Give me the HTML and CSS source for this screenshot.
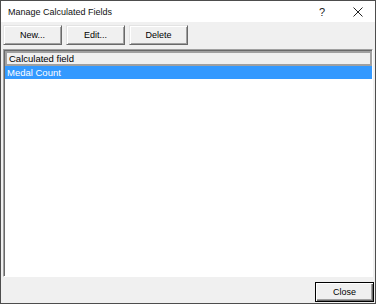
FILE: index.html
```html
<!DOCTYPE html>
<html lang="en">
<head>
  <meta charset="UTF-8" />
  <title>Manage Calculated Fields</title>
  <link rel="stylesheet" href="styles.css">
</head>
<body>

  <div class="dialog">
    <div class="titlebar">
      <span class="title">Manage Calculated Fields</span>
      <span class="help">?</span>
      <svg class="close-x" viewBox="0 0 10 10" width="10" height="10">
        <path d="M0.5 0.5 L9.5 9.5 M9.5 0.5 L0.5 9.5" stroke="#222" stroke-width="1"/>
      </svg>
    </div>

    <div class="toolbar">
      <button class="btn">New...</button>
      <button class="btn">Edit...</button>
      <button class="btn">Delete</button>
    </div>

    <div class="list">
      <div class="list-header">Calculated field</div>
      <div class="list-row selected">Medal Count</div>
    </div>

    <div class="footer">
      <button class="btn default">Close</button>
    </div>
  </div>

</body>
</html>
```

FILE: styles.css
```css
html, body {
  margin: 0;
  padding: 0;
  background: #fff;
  font-family: "Liberation Sans", Arial, sans-serif;
  font-size: 9.5px;
  color: #000;
}

.dialog {
  width: 376px;
  height: 304px;
  box-sizing: border-box;
  border: 1px solid #4d4d4d;
  background: #f0f0f0;
  display: flex;
  flex-direction: column;
}

.titlebar {
  height: 21px;
  background: #fff;
  display: flex;
  align-items: center;
  padding: 0 0 0 7px;
}

.title {
  flex: 1;
  font-size: 9px;
  color: #111;
}

.help {
  font-size: 11px;
  width: 10px;
  margin-right: 24px;
  color: #222;
}

.close-x {
  margin-right: 12px;
}

.toolbar {
  display: flex;
  gap: 4px;
  padding: 3px 2px 0;
}

.btn {
  width: 59px;
  height: 20px;
  box-sizing: border-box;
  margin: 0;
  padding: 0;
  font-family: "Liberation Sans", Arial, sans-serif;
  font-size: 9px;
  color: #000;
  background: #f0f0f0;
  border: 1px solid;
  border-color: #e3e3e3 #696969 #696969 #e3e3e3;
  box-shadow: inset 1px 1px #fff, inset -1px -1px #a0a0a0;
}

.list {
  flex: 1;
  margin: 4px 2px 5px;
  background: #fff;
  border: 1px solid;
  border-color: #a0a0a0 #fff #fff #a0a0a0;
  box-shadow: inset 1px 1px #696969;
  padding: 1px 0 0 1px;
}

.list-header {
  height: 15px;
  box-sizing: border-box;
  border: 2px solid #a0a0a0;
  background: #f0f0f0;
  line-height: 11px;
  padding-left: 2px;
}

.list-row {
  height: 13px;
  line-height: 13px;
  padding-left: 2px;
}

.list-row.selected {
  background: #3399ff;
  color: #fff;
}

.footer {
  display: flex;
  justify-content: flex-end;
  padding: 0 1px 1px;
}

.btn.default {
  width: 59px;
  border: 1px solid #000;
  box-shadow: inset 1px 1px #fff, inset -1px -1px #696969, inset -2px -2px #a0a0a0;
}
```
